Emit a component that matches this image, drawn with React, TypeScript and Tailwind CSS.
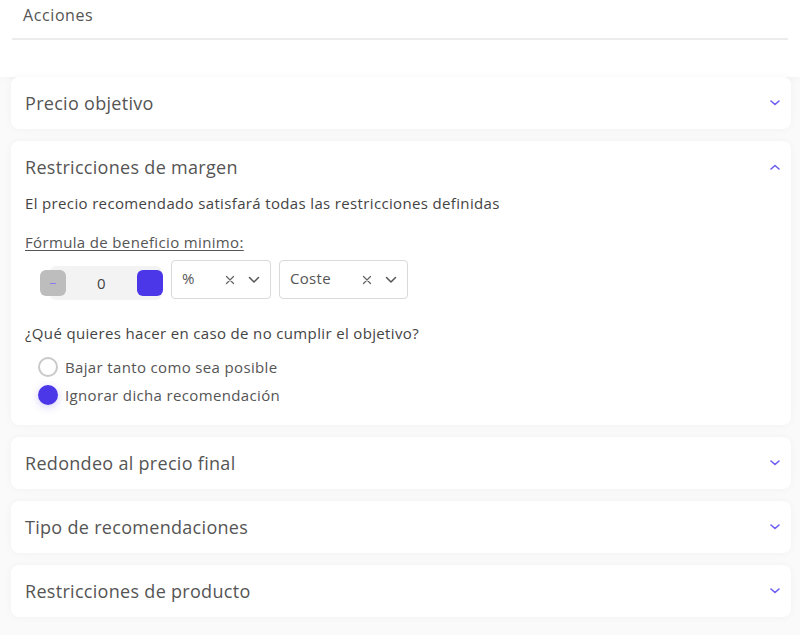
import React from "react";

const Chevron = ({ up = false }: { up?: boolean }) => (
  <svg width="10" height="6" viewBox="0 0 10 6" className="text-[#6a5cf2]">
    <path d={up ? "M1 5 L5 1.5 L9 5" : "M1 1 L5 4.5 L9 1"} fill="none" stroke="currentColor" strokeWidth="1.6" strokeLinecap="round" strokeLinejoin="round" />
  </svg>
);

const SmallX = () => (
  <svg width="10" height="10" viewBox="0 0 10 10">
    <path d="M1.5 1.5 L8.5 8.5 M8.5 1.5 L1.5 8.5" stroke="#666" strokeWidth="1.3" strokeLinecap="round" />
  </svg>
);
const SelChev = () => (
  <svg width="12" height="8" viewBox="0 0 12 8">
    <path d="M1.5 1.5 L6 6 L10.5 1.5" fill="none" stroke="#555" strokeWidth="1.5" strokeLinecap="round" strokeLinejoin="round" />
  </svg>
);

const Card = ({ title, children, open = false }: { title: string; children?: React.ReactNode; open?: boolean }) => (
  <div className="bg-white rounded-lg shadow-[0_0_8px_rgba(0,0,0,0.04)]">
    <div className="flex items-center justify-between h-[52px] pl-[14px] pr-[11px]">
      <span className="text-[18px] tracking-[0.3px] text-[#555]">{title}</span>
      <Chevron up={open} />
    </div>
    {children}
  </div>
);

const Select = ({ label, w }: { label: string; w: string }) => (
  <div className={`flex items-center h-[39px] border border-[#d9d9d9] rounded ${w} pl-[10px] pr-[10px]`}>
    <span className="flex-1 text-[15px] tracking-[0.3px] text-[#555] -mt-[3px]">{label}</span>
    <div className="flex items-center gap-[13px]">
      <SmallX />
      <SelChev />
    </div>
  </div>
);

export default function App() {
  return (
    <div className="w-[800px] h-[635px] bg-[#fafafa] overflow-hidden" style={{ fontFamily: '"Open Sans", "Noto Sans", sans-serif' }}>
      <div className="bg-white px-[12px] pt-[4px] shadow-[0_-2px_12px_rgba(0,0,0,0.06)]">
        <div className="pl-[11px] h-[36px] text-[16px] tracking-[0.6px] text-[#555] border-b-2 border-[#ececec] leading-[22px]">Acciones</div>
        <div className="h-[37px]" />
      </div>
      <div className="flex flex-col gap-[12px] pl-[11px] pr-[9px]">
        <Card title="Precio objetivo" />
        <Card title="Restricciones de margen" open>
          <div className="pl-[14px] pb-[20px] text-[15px] tracking-[0.35px] leading-[20px]">
            <div className="text-[#444]">El precio recomendado satisfará todas las restricciones definidas</div>
            <div className="mt-[19px] text-[#555] underline underline-offset-2">Fórmula de beneficio minimo:</div>
            <div className="mt-[8px] flex items-start gap-[8px]">
              <div className="flex items-center w-[123px] h-[34px] relative ml-[15px] mt-[6px]">
                <div className="absolute left-[10px] right-[1px] top-0 bottom-0 bg-[#f3f3f3] rounded-md" />
                <div className="relative w-[26px] h-[26px] rounded-md bg-[#bdbdbd] flex items-center justify-center">
                  <div className="w-[6px] h-[1px] bg-[#8a7bf0]" />
                </div>
                <div className="relative flex-1 text-center text-[15px] text-[#444]">0</div>
                <div className="relative w-[26px] h-[26px] rounded-md bg-[#4b36e8]" />
              </div>
              <Select label="%" w="w-[100px]" />
              <Select label="Coste" w="w-[129px]" />
            </div>
            <div className="mt-[23px] text-[#444]">¿Qué quieres hacer en caso de no cumplir el objetivo?</div>
            <div className="mt-[14px] flex flex-col gap-[8px] ml-[13px]">
              <div className="flex items-center gap-[7px]">
                <div className="w-[20px] h-[20px] rounded-full border-2 border-[#c9c9c9] bg-white" />
                <span className="text-[#555]">Bajar tanto como sea posible</span>
              </div>
              <div className="flex items-center gap-[7px]">
                <div className="w-[20px] h-[20px] rounded-full bg-[#4b36e8] shadow-[0_2px_8px_rgba(75,54,232,0.25)]" />
                <span className="text-[#555]">Ignorar dicha recomendación</span>
              </div>
            </div>
          </div>
        </Card>
        <Card title="Redondeo al precio final" />
        <Card title="Tipo de recomendaciones" />
        <Card title="Restricciones de producto" />
      </div>
    </div>
  );
}
